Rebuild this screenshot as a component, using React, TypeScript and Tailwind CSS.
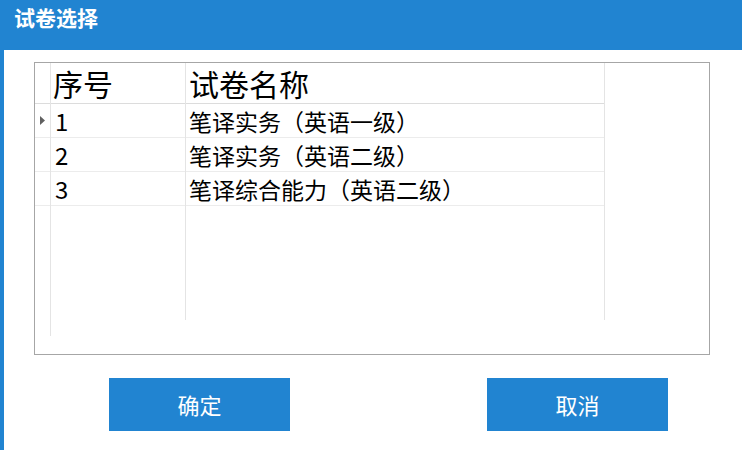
const papers = [
  { id: 1, title: '笔译实务', lang: '英语一级' },
  { id: 2, title: '笔译实务', lang: '英语二级' },
  { id: 3, title: '笔译综合能力', lang: '英语二级' },
]

const font = { fontFamily: '"Noto Sans CJK SC", "Noto Sans", sans-serif' }

export default function App() {
  return (
    <div className="w-[742px] h-[450px] bg-white flex flex-col overflow-hidden" style={font}>
      <div className="h-[50px] bg-[#2184d1] px-[14px] pt-[2px] text-white text-[21px] leading-[30px] font-bold">
        试卷选择
      </div>
      <div className="flex-1 flex border-l-4 border-[#2184d1]">
        <div className="flex-1 flex flex-col pl-[30px] pt-3">
          <div className="w-[676px] h-[293px] border border-[#a6a6a6] flex">
            {/* row headers */}
            <div className="w-[15px] flex flex-col">
              <div className="h-[41px] border-b border-[#dcdcdc]" />
              {papers.map((p, i) => (
                <div key={p.id} className="h-[34px] border-b border-[#ececec] flex items-center justify-center">
                  {i === 0 && (
                    <svg width="5" height="9" viewBox="0 0 5 9">
                      <path d="M0 0 L5 4.5 L0 9 Z" fill="#606060" />
                    </svg>
                  )}
                </div>
              ))}
            </div>
            <div className="w-[135px] flex flex-col border-l border-[#e4e4e4] h-[273px]">
              <div className="h-[41px] border-b border-[#dcdcdc] pl-[2px] text-[30px] leading-[41px] text-black">序号</div>
              {papers.map(p => (
                <div key={p.id} className="h-[34px] border-b border-[#ececec] pl-[4px] text-[24px] leading-[34px] text-black">
                  {p.id}
                </div>
              ))}
            </div>
            <div className="w-[420px] flex flex-col border-l border-[#e4e4e4] border-r h-[257px]">
              <div className="h-[41px] border-b border-[#dcdcdc] pl-[3px] text-[30px] leading-[41px] text-black">试卷名称</div>
              {papers.map(p => (
                <div
                  key={p.id}
                  className="h-[34px] border-b border-[#ececec] pl-[3px] text-[23px] leading-[34px] text-black whitespace-nowrap"
                >
                  {p.title}
                  <span className="inline-block w-[1em] text-right">（</span>
                  {p.lang}
                  <span className="inline-block w-[1em] text-left">）</span>
                </div>
              ))}
            </div>
          </div>
          <div className="flex mt-[23px]">
            <button className="ml-[75px] w-[181px] h-[53px] bg-[#2184d1] text-white text-[22px]">确定</button>
            <button className="ml-[197px] w-[181px] h-[53px] bg-[#2184d1] text-white text-[22px]">取消</button>
          </div>
        </div>
      </div>
    </div>
  )
}
